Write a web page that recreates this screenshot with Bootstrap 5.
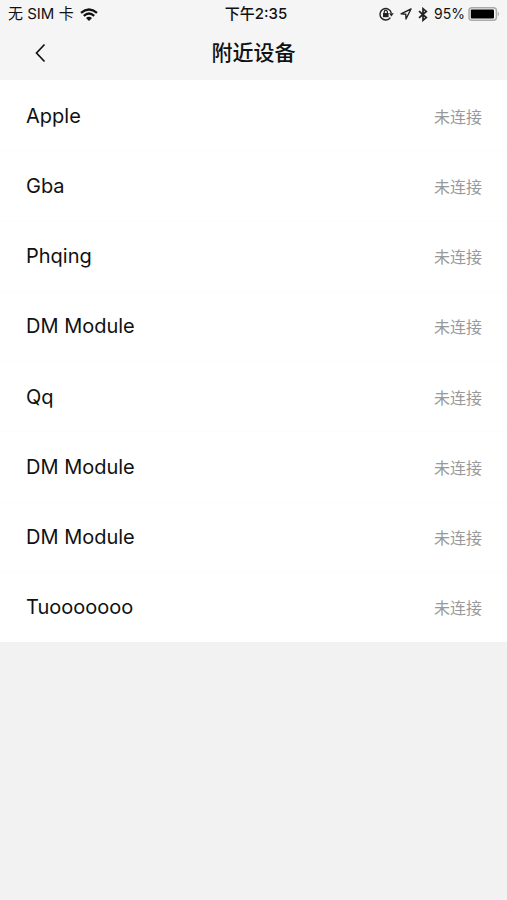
<!DOCTYPE html>
<html lang="zh-CN">
<head>
<meta charset="utf-8">
<meta name="viewport" content="width=device-width, initial-scale=1">
<title>附近设备</title>
<link href="https://cdn.jsdelivr.net/npm/bootstrap@5.3.0/dist/css/bootstrap.min.css" rel="stylesheet">
<style>
  body { background: #f2f2f2; color: #111; font-family: Inter, "Noto Sans CJK SC", sans-serif; }
  .top-area { background: #f5f5f5; height: 80px; }
  .status-bar { height: 28px; padding: 0 7px 0 8px; font-size: 14px; line-height: 20px; }
  .status-bar svg, .back-btn svg { display: block; flex: none; }
  .status-side { flex: 1 1 0; gap: 6px; }
  .power { gap: 3px; }
  .carrier, .clock { font-size: 15px; }
  .clock { font-weight: 500; }
  .title-bar { height: 52px; padding: 0 26px 2px; }
  .title-bar h1 { font-size: 21px; line-height: 28px; font-weight: 500; }
  .title-side { flex: 1 1 0; }
  .back-btn { padding: 4px 8px; border: 0; }
  .device-list { min-height: 562px; background: #fff; }
  .device { padding: 0 25px 0 26px; }
  .device + .device { box-shadow: inset 0 1px #fdfdfd; }
  .device-name { padding-top: 1px; font-size: 20px; line-height: 28px; }
  .device-state { padding-top: 3px; font-size: 16px; line-height: 24px; color: #999; }
</style>
</head>
<body>
<header class="top-area">
  <div class="status-bar d-flex align-items-center text-nowrap">
    <div class="status-side d-flex align-items-center">
      <span class="carrier">无 SIM 卡</span>
      <svg width="18" height="13" viewBox="0 0 18 13" fill="none" stroke="#111" stroke-width="2.3" aria-label="Wi-Fi">
        <path d="M1 4.8Q9-1.8 17 4.8M3.8 7.8Q9 3.3 14.2 7.8"/>
        <path d="M6 10Q9 7.6 12 10L9 12.9Z" fill="#111" stroke="none"/>
      </svg>
    </div>
    <span class="clock ms-1">下午2:35</span>
    <div class="status-side d-flex align-items-center justify-content-end">
      <svg width="15" height="14" viewBox="0 0 15 14" fill="none" stroke="#222" aria-label="方向锁定">
        <path d="M11.4 10.6A5.7 5.7 0 1 1 12.3 6" stroke-width="1.4"/>
        <path d="M10 6.2h4.8l-2.4 3.2z" fill="#222" stroke="none"/>
        <path d="M5.2 6.6V5a1.6 1.6 0 0 1 3.2 0v1.6" stroke-width="1.2"/>
        <path d="M4 6h5.6v4.2H4z" fill="#222" stroke="none"/>
      </svg>
      <svg width="12" height="12" viewBox="0 0 12 12" fill="none" stroke="#222" stroke-width="1.4" stroke-linejoin="round" aria-label="定位">
        <path d="M11 1L1 5.8l4.8.4.2 4.8z"/>
      </svg>
      <svg width="10" height="15" viewBox="0 0 10 15" fill="none" stroke="#222" stroke-width="1.7" aria-label="蓝牙">
        <path d="M1 4.2l7.3 6.4L5 13.3V1.7l3.3 2.7L1 10.8"/>
      </svg>
      <div class="power d-flex align-items-center">
        <span>95%</span>
        <svg width="32" height="14" viewBox="0 0 32 14" aria-label="电量">
          <rect x="1" y=".8" width="27.4" height="12.4" rx="3" fill="none" stroke="#aaa" stroke-width="1.5"/>
          <rect x="2.8" y="2.6" width="23.2" height="8.8" rx="1" fill="#000"/>
          <path d="M29.8 4.6q2.4 2.4 0 4.8z" fill="#aaa"/>
        </svg>
      </div>
    </div>
  </div>
  <nav class="title-bar d-flex align-items-center">
    <div class="title-side">
      <button type="button" class="back-btn btn d-block" aria-label="返回">
        <svg width="12" height="20" viewBox="0 0 12 20" fill="none" stroke="#111" stroke-width="1.7"><path d="M10.5 1.5L2.5 10l8 8.5"/></svg>
      </button>
    </div>
    <h1 class="m-0 text-nowrap">附近设备</h1>
    <div class="title-side"></div>
  </nav>
</header>
<main>
  <ul class="device-list list-unstyled m-0 d-flex flex-column">
    <li class="device flex-fill d-flex align-items-center justify-content-between"><span class="device-name">Apple</span><span class="device-state">未连接</span></li>
    <li class="device flex-fill d-flex align-items-center justify-content-between"><span class="device-name">Gba</span><span class="device-state">未连接</span></li>
    <li class="device flex-fill d-flex align-items-center justify-content-between"><span class="device-name">Phqing</span><span class="device-state">未连接</span></li>
    <li class="device flex-fill d-flex align-items-center justify-content-between"><span class="device-name">DM Module</span><span class="device-state">未连接</span></li>
    <li class="device flex-fill d-flex align-items-center justify-content-between"><span class="device-name">Qq</span><span class="device-state">未连接</span></li>
    <li class="device flex-fill d-flex align-items-center justify-content-between"><span class="device-name">DM Module</span><span class="device-state">未连接</span></li>
    <li class="device flex-fill d-flex align-items-center justify-content-between"><span class="device-name">DM Module</span><span class="device-state">未连接</span></li>
    <li class="device flex-fill d-flex align-items-center justify-content-between"><span class="device-name">Tuooooooo</span><span class="device-state">未连接</span></li>
  </ul>
</main>
<script src="https://cdn.jsdelivr.net/npm/bootstrap@5.3.0/dist/js/bootstrap.bundle.min.js"></script>
</body>
</html>
